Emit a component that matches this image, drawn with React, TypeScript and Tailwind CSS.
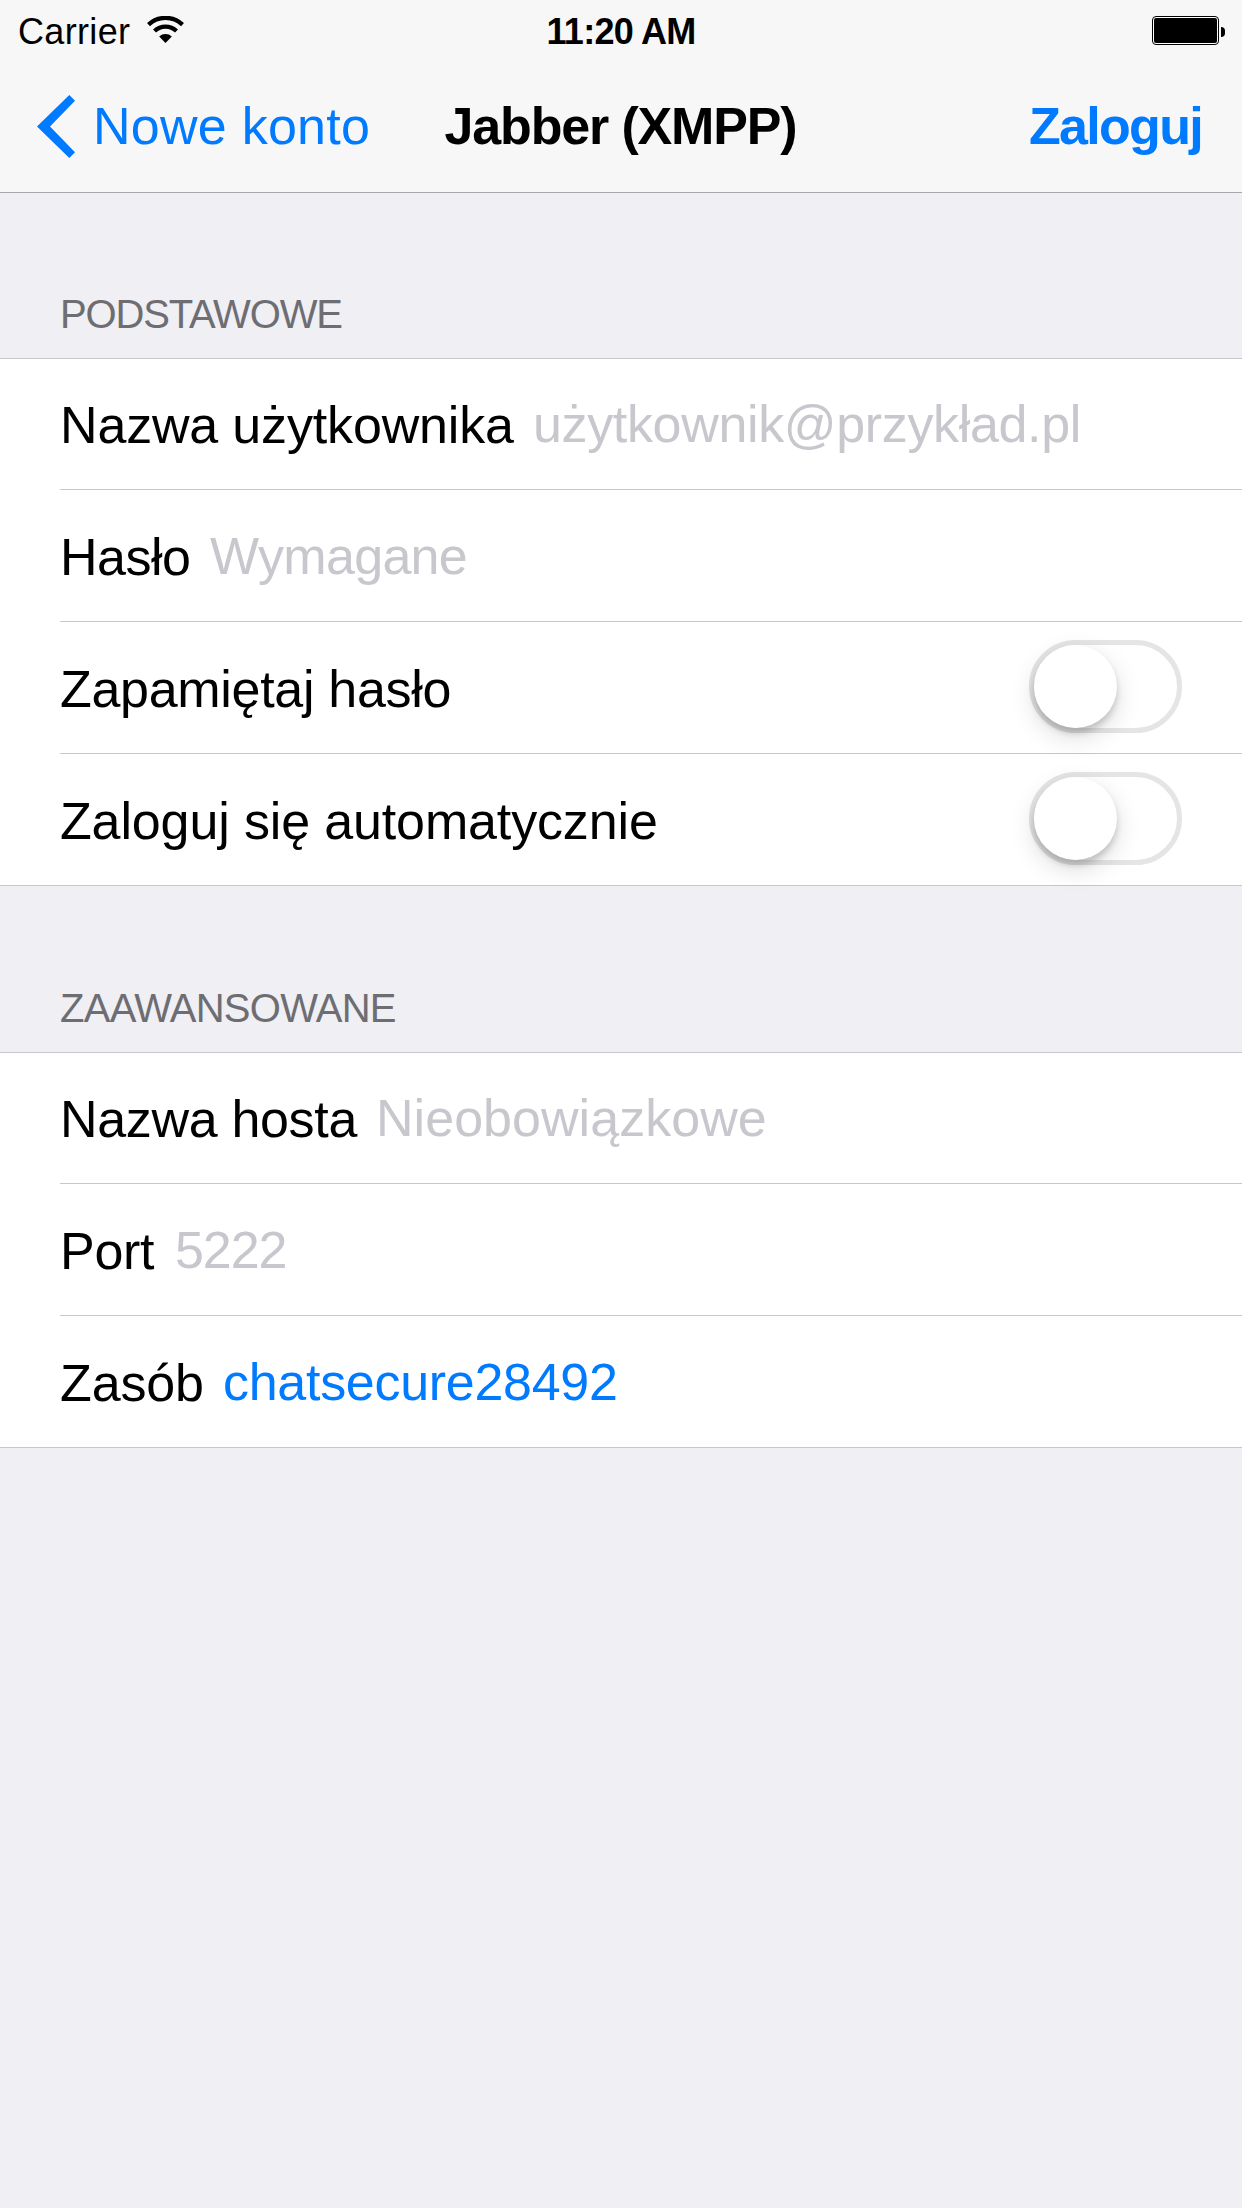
import type { ReactNode } from "react";

function WifiIcon() {
  return (
    <svg className="h-[28px] w-[37px]" viewBox="0 0 37 28" fill="none">
      <path d="M1.5 8.6A24.9 24.9 0 0 1 35.5 8.6" stroke="#000" strokeWidth="4.3" />
      <path d="M7.5 15A16 16 0 0 1 29.5 15" stroke="#000" strokeWidth="4.3" />
      <path d="M12.2 20.6A9.2 9.2 0 0 1 24.8 20.6L18.5 27Z" fill="#000" />
    </svg>
  );
}

function Battery() {
  return (
    <div className="flex items-center gap-[2px]">
      <div className="h-[29px] w-[67px] rounded-[4px] border border-black bg-white p-px">
        <div className="h-full w-full rounded-[2px] bg-black" />
      </div>
      <div className="mt-[2px] h-[10px] w-[4px] rounded-r-full bg-black" />
    </div>
  );
}

function StatusBar() {
  return (
    <div className="grid h-[60px] grid-cols-[1fr_auto_1fr] text-[36px] leading-[41px]">
      <div className="flex pl-[18px] pt-[11px]">
        <span className="w-[129px] tracking-[0.33px]">Carrier</span>
        <span className="pt-[5px]">
          <WifiIcon />
        </span>
      </div>
      <span className="pt-[11px] font-bold tracking-[-0.73px]">11:20 AM</span>
      <div className="flex items-start justify-end pr-[17px] pt-[16px]">
        <Battery />
      </div>
    </div>
  );
}

function NavBar() {
  return (
    <div className="grid h-[132px] grid-cols-[1fr_auto_1fr] items-start pt-[36px] leading-[60px]">
      <button className="flex text-left tracking-[0.25px] text-[#007aff]">
        <svg className="ml-[37px] mt-[-1px] h-[63px] w-[38px]" viewBox="0 0 38 63">
          <path d="M0 31.5L32.3 0L38 5.7L13 31.5L38 57.3L32.3 63Z" fill="#007aff" />
        </svg>
        <span className="ml-[18px]">Nowe konto</span>
      </button>
      <h1 className="-ml-px font-bold tracking-[-1.17px]">Jabber (XMPP)</h1>
      <button className="pr-[40px] text-right font-bold tracking-[-1.7px] text-[#007aff]">Zaloguj</button>
    </div>
  );
}

function Toggle() {
  return (
    <div className="mr-[60px] mt-[18px] h-[93px] w-[153px] rounded-full border-[5px] border-[#e5e5e5]">
      <div className="h-[83px] w-[83px] rounded-full bg-white shadow-[0_9px_26px_rgba(0,0,0,0.14),0_5px_6px_rgba(0,0,0,0.17)]" />
    </div>
  );
}

function Row({ label, labelClass, children, first, last }: { label: string; labelClass: string; children?: ReactNode; first?: boolean; last?: boolean }) {
  return (
    <div className={last ? "" : "pl-[60px]"}>
      <div
        className={`flex border-b border-[#c8c7cc] ${first ? "h-[131px]" : "h-[132px]"} ${last ? "pl-[60px]" : ""}`}
      >
        <span className={`shrink-0 whitespace-nowrap ${first ? "pt-[36px]" : "pt-[37px]"} ${labelClass}`}>{label}</span>
        {children}
      </div>
    </div>
  );
}

export default function App() {
  return (
    <div className="min-h-[2208px] w-[1242px] overflow-hidden bg-[#efeff4] font-['Liberation_Sans',Arial,sans-serif] text-[52px] leading-[60px] text-black">
      <header className="border-b border-[#a7a7aa] bg-[#f7f7f7]">
        <StatusBar />
        <NavBar />
      </header>

      <h2 className="h-[165px] pl-[60px] pt-[98px] text-[40px] leading-[46px] tracking-[-1.15px] text-[#6d6d72]">
        PODSTAWOWE
      </h2>
      <section className="border-t border-[#c8c7cc] bg-white">
        <Row first label="Nazwa użytkownika" labelClass="w-[473px] tracking-[-0.17px]">
          <span className="pt-[35px] tracking-[-0.35px] text-[#c7c7cd]">użytkownik@przykład.pl</span>
        </Row>
        <Row label="Hasło" labelClass="w-[150px] tracking-[-0.5px]">
          <span className="pt-[36px] tracking-[-0.68px] text-[#c7c7cd]">Wymagane</span>
        </Row>
        <Row label="Zapamiętaj hasło" labelClass="grow tracking-[-0.31px]">
          <Toggle />
        </Row>
        <Row last label="Zaloguj się automatycznie" labelClass="grow tracking-[-0.14px]">
          <Toggle />
        </Row>
      </section>

      <h2 className="h-[166px] pl-[60px] pt-[99px] text-[40px] leading-[46px] tracking-[-0.72px] text-[#6d6d72]">
        ZAAWANSOWANE
      </h2>
      <section className="border-t border-[#c8c7cc] bg-white">
        <Row first label="Nazwa hosta" labelClass="w-[316px] tracking-[-0.33px]">
          <span className="pt-[35px] tracking-[0.04px] text-[#c7c7cd]">Nieobowiązkowe</span>
        </Row>
        <Row label="Port" labelClass="w-[115px] tracking-[-0.3px]">
          <span className="pt-[36px] tracking-[-1.1px] text-[#c7c7cd]">5222</span>
        </Row>
        <Row last label="Zasób" labelClass="w-[163px] tracking-[-0.12px]">
          <span className="pt-[36px] tracking-[-0.29px] text-[#007aff]">chatsecure28492</span>
        </Row>
      </section>
    </div>
  );
}
